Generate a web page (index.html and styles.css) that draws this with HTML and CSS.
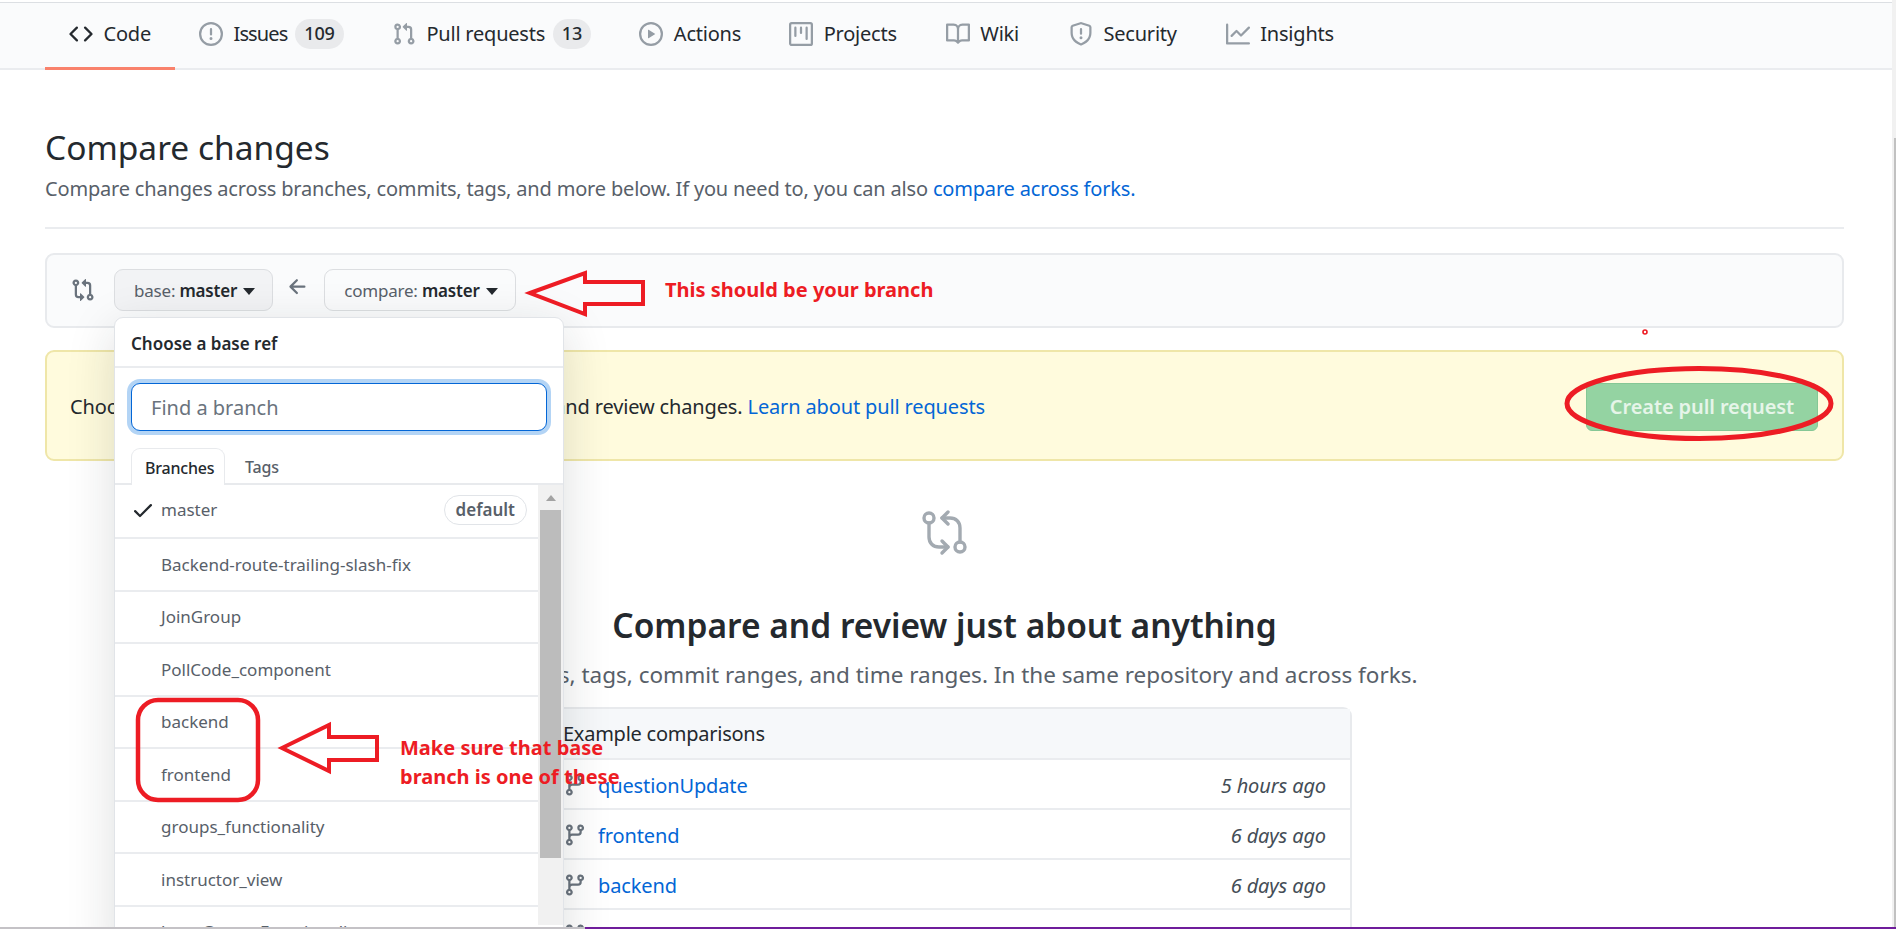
FILE: index.html
```html
<!DOCTYPE html>
<html lang="en">
<head>
<meta charset="utf-8">
<title>Compare changes</title>
<link rel="stylesheet" href="styles.css">
</head>
<body>
<div class="viewport">
  <div class="app">
    <nav class="tabs">
      <a class="tab tab-active"><svg class="oct oct-dark" viewBox="0 0 16 16"><path d="M4.72 3.22a.75.75 0 011.06 1.06L2.06 8l3.72 3.72a.75.75 0 11-1.06 1.06L.47 8.53a.75.75 0 010-1.06l4.25-4.25zm6.56 0a.75.75 0 10-1.06 1.06L13.94 8l-3.72 3.72a.75.75 0 101.06 1.06l4.25-4.25a.75.75 0 000-1.06l-4.25-4.25z"/></svg><span>Code</span></a>
      <a class="tab"><svg class="oct" viewBox="0 0 16 16"><path d="M8 1.5a6.5 6.5 0 100 13 6.5 6.5 0 000-13zM0 8a8 8 0 1116 0A8 8 0 010 8zm9 3a1 1 0 11-2 0 1 1 0 012 0zm-.25-6.25a.75.75 0 00-1.5 0v3.5a.75.75 0 001.5 0v-3.5z"/></svg><span class="tab-tight">Issues</span><b class="count">109</b></a>
      <a class="tab"><svg class="oct" viewBox="0 0 16 16"><path d="M7.177 3.073L9.573.677A.25.25 0 0110 .854v4.792a.25.25 0 01-.427.177L7.177 3.427a.25.25 0 010-.354zM3.75 2.5a.75.75 0 100 1.5.75.75 0 000-1.5zm-2.25.75a2.25 2.25 0 113 2.122v5.256a2.251 2.251 0 11-1.5 0V5.372A2.25 2.25 0 011.5 3.25zM11 2.5h-1V4h1a1 1 0 011 1v5.628a2.251 2.251 0 101.5 0V5A2.5 2.5 0 0011 2.5zm1 10.25a.75.75 0 111.5 0 .75.75 0 01-1.5 0zM3.75 12a.75.75 0 100 1.5.75.75 0 000-1.5z"/></svg><span>Pull requests</span><b class="count">13</b></a>
      <a class="tab"><svg class="oct" viewBox="0 0 16 16"><path d="M1.5 8a6.5 6.5 0 1113 0 6.5 6.5 0 01-13 0zM8 0a8 8 0 100 16A8 8 0 008 0zM6.379 5.227A.25.25 0 006 5.442v5.117a.25.25 0 00.379.214l4.264-2.559a.25.25 0 000-.428L6.379 5.227z"/></svg><span>Actions</span></a>
      <a class="tab"><svg class="oct" viewBox="0 0 16 16"><path d="M1.75 0A1.75 1.75 0 000 1.75v12.5C0 15.216.784 16 1.75 16h12.5A1.75 1.75 0 0016 14.25V1.75A1.75 1.75 0 0014.25 0H1.75zM1.5 1.75a.25.25 0 01.25-.25h12.5a.25.25 0 01.25.25v12.5a.25.25 0 01-.25.25H1.75a.25.25 0 01-.25-.25V1.75zM11.75 3a.75.75 0 00-.75.75v7.5a.75.75 0 001.5 0v-7.5a.75.75 0 00-.75-.75zm-8.25.75a.75.75 0 011.5 0v5.5a.75.75 0 01-1.5 0v-5.5zM8 3a.75.75 0 00-.75.75v3.5a.75.75 0 001.5 0v-3.5A.75.75 0 008 3z"/></svg><span>Projects</span></a>
      <a class="tab tab-wide"><svg class="oct" viewBox="0 0 16 16"><path d="M0 1.75A.75.75 0 01.75 1h4.253c1.227 0 2.317.59 3 1.501A3.744 3.744 0 0111.006 1h4.245a.75.75 0 01.75.75v10.5a.75.75 0 01-.75.75h-4.507a2.25 2.25 0 00-1.591.659l-.622.621a.75.75 0 01-1.06 0l-.622-.621A2.25 2.25 0 005.258 13H.75a.75.75 0 01-.75-.75V1.75zm8.755 3a2.25 2.25 0 012.25-2.25H14.5v9h-3.757c-.71 0-1.4.201-1.992.572l.004-7.322zm-1.504 7.324l.004-5.073-.002-2.253A2.25 2.25 0 005.003 2.5H1.5v9h3.757a3.75 3.75 0 011.994.574z"/></svg><span>Wiki</span></a>
      <a class="tab tab-wide"><svg class="oct" viewBox="0 0 16 16"><path d="M7.467.133a1.75 1.75 0 011.066 0l5.25 1.68A1.75 1.75 0 0115 3.48V7c0 1.566-.32 3.182-1.303 4.682-.983 1.498-2.585 2.813-5.032 3.855a1.7 1.7 0 01-1.33 0c-2.447-1.042-4.049-2.357-5.032-3.855C1.32 10.182 1 8.566 1 7V3.48a1.75 1.75 0 011.217-1.667l5.25-1.68zm.61 1.429a.25.25 0 00-.153 0l-5.25 1.68a.25.25 0 00-.174.238V7c0 1.358.275 2.666 1.057 3.86.784 1.194 2.121 2.34 4.366 3.297a.2.2 0 00.154 0c2.245-.956 3.582-2.104 4.366-3.298C13.225 9.666 13.5 8.36 13.5 7V3.48a.25.25 0 00-.174-.237l-5.25-1.68zM9 10.5a1 1 0 11-2 0 1 1 0 012 0zm-.25-5.75a.75.75 0 10-1.5 0v3a.75.75 0 001.5 0v-3z"/></svg><span>Security</span></a>
      <a class="tab"><svg class="oct" viewBox="0 0 16 16"><path d="M1.5 1.75a.75.75 0 00-1.5 0v12.5c0 .414.336.75.75.75h14.5a.75.75 0 000-1.5H1.5V1.75zm14.28 2.53a.75.75 0 00-1.06-1.06L10 7.94 7.53 5.47a.75.75 0 00-1.06 0L3.22 8.72a.75.75 0 001.06 1.06L7 7.06l2.47 2.47a.75.75 0 001.06 0l5.25-5.25z"/></svg><span>Insights</span></a>
    </nav>

    <main class="content">
      <h1 class="title">Compare changes</h1>
      <p class="lead">Compare changes across branches, commits, tags, and more below. If you need to, you can also <a class="link">compare across forks.</a></p>
      <hr class="rule">

      <section class="range">
        <svg class="oct oct-mid" viewBox="0 0 16 16"><path d="M9.573.677L7.177 3.073a.25.25 0 000 .354l2.396 2.396A.25.25 0 0010 5.646V4h1a1 1 0 011 1v5.628a2.251 2.251 0 101.5 0V5A2.5 2.5 0 0011 2.5h-1V.854a.25.25 0 00-.427-.177zM6 12v-1.646a.25.25 0 01.427-.177l2.396 2.396a.25.25 0 010 .354l-2.396 2.396A.25.25 0 016 15.146V13.5H5A2.5 2.5 0 012.5 11V5.372a2.25 2.25 0 111.5 0V11a1 1 0 001 1h1zm6.75 0a.75.75 0 100 1.5.75.75 0 000-1.5zM4 3.25a.75.75 0 11-1.5 0 .75.75 0 011.5 0z"/></svg>
        <button class="ref ref-open">base: <b>master</b><i class="caret"></i></button>
        <svg class="oct oct-mid range-arrow" viewBox="0 0 16 16"><path d="M7.78 12.53a.75.75 0 01-1.06 0L2.47 8.28a.75.75 0 010-1.06l4.25-4.25a.75.75 0 011.06 1.06L4.81 7h7.44a.75.75 0 010 1.5H4.81l2.97 2.97a.75.75 0 010 1.06z"/></svg>
        <button class="ref">compare: <b>master</b><i class="caret"></i></button>
      </section>

      <section class="notice">
        <p class="notice-text">Choose different branches or forks above to discuss and review changes. <a class="link">Learn about pull requests</a></p>
        <button class="create">Create pull request</button>
      </section>

      <section class="blank">
        <svg class="blank-icon" viewBox="0 0 50 50"><g fill="none" stroke="#a3aab1" stroke-width="3.4" stroke-linecap="round" stroke-linejoin="round"><circle cx="9" cy="8" r="5"/><circle cx="40" cy="37" r="5"/><path d="M9 13v14c0 6 4 10 10 10h9"/><path d="M22 31l6 6-6 6"/><path d="M40 32V18c0-6-4-10-10-10h-8"/><path d="M28 2l-6 6 6 6"/></g></svg>
        <h2 class="blank-title">Compare and review just about anything</h2>
        <p class="blank-sub">Branches, tags, commit ranges, and time ranges. In the same repository and across forks.</p>
        <div class="examples">
          <div class="examples-head">Example comparisons</div>
          <div class="example"><svg class="oct oct-mid" viewBox="0 0 16 16"><use href="#branch"/></svg><a class="link">questionUpdate</a><em>5 hours ago</em></div>
          <div class="example"><svg class="oct oct-mid" viewBox="0 0 16 16"><use href="#branch"/></svg><a class="link">frontend</a><em>6 days ago</em></div>
          <div class="example"><svg class="oct oct-mid" viewBox="0 0 16 16"><use href="#branch"/></svg><a class="link">backend</a><em>6 days ago</em></div>
          <div class="example"><svg class="oct oct-mid" viewBox="0 0 16 16"><use href="#branch"/></svg></div>
        </div>
      </section>
    </main>

    <div class="menu">
      <div class="menu-title">Choose a base ref</div>
      <div class="menu-filter"><input class="menu-input" type="text" placeholder="Find a branch"></div>
      <div class="menu-tabs"><span class="menu-tab menu-tab-on">Branches</span><span class="menu-tab">Tags</span></div>
      <div class="menu-body">
        <ul class="menu-list">
          <li class="menu-item menu-item-first"><svg class="oct oct-check" viewBox="0 0 16 16"><path d="M13.78 4.22a.75.75 0 010 1.06l-7.25 7.25a.75.75 0 01-1.06 0L2.22 9.28a.75.75 0 011.06-1.06L6 10.94l6.72-6.72a.75.75 0 011.06 0z"/></svg><span class="menu-name">master</span><span class="default">default</span></li>
          <li class="menu-item"><span class="menu-name">Backend-route-trailing-slash-fix</span></li>
          <li class="menu-item"><span class="menu-name">JoinGroup</span></li>
          <li class="menu-item"><span class="menu-name">PollCode_component</span></li>
          <li class="menu-item"><span class="menu-name">backend</span></li>
          <li class="menu-item"><span class="menu-name">frontend</span></li>
          <li class="menu-item"><span class="menu-name">groups_functionality</span></li>
          <li class="menu-item"><span class="menu-name">instructor_view</span></li>
          <li class="menu-item"><span class="menu-name">learnGroup_Functionality</span></li>
        </ul>
        <div class="menu-scroll"><i class="menu-scroll-up"></i><i class="menu-scroll-thumb"></i></div>
      </div>
    </div>

    <svg class="marks" viewBox="0 0 1892 927">
      <defs><path id="branch" fill-rule="evenodd" d="M11.75 2.5a.75.75 0 100 1.5.75.75 0 000-1.5zm-2.25.75a2.25 2.25 0 113 2.122V6A2.5 2.5 0 0110 8.5H6a1 1 0 00-1 1v1.128a2.251 2.251 0 11-1.5 0V5.372a2.25 2.25 0 111.5 0v1.836A2.492 2.492 0 016 7h4a1 1 0 001-1v-.628A2.25 2.25 0 019.5 3.25zM4.25 12a.75.75 0 100 1.5.75.75 0 000-1.5zM3.5 3.25a.75.75 0 111.5 0 .75.75 0 01-1.5 0z"/></defs>
      <g fill="none" stroke="#ed1c24" stroke-width="4">
        <path d="M530 293L585 273V282H643V304H585V314Z"/>
        <path d="M282 748L329 725V737H377V760H329V771Z"/>
        <rect x="138" y="700" width="120" height="100" rx="20" stroke-width="4.5"/>
        <ellipse cx="1699" cy="403.500" rx="132" ry="35" stroke-width="5"/>
        <circle cx="1645" cy="332" r="2" stroke-width="1.600"/>
      </g>
    </svg>
    <div class="note note-one">This should be your branch</div>
    <div class="note note-two">Make sure that base<br>branch is one of these</div>
  </div>
  <div class="page-scroll"><i class="page-scroll-thumb"></i></div>
</div>
<div class="taskbar"><i class="taskbar-gray"></i><i class="taskbar-purple"></i></div>
</body>
</html>
```

FILE: styles.css
```css
* { box-sizing: border-box; }
html, body { margin: 0; height: 929px; overflow: hidden; background: #fff; }
body { display: flex; flex-direction: column; font-family: "Noto Sans", "Open Sans", sans-serif; color: #24292e; font-size: 20px; }
p, h1, h2, ul { margin: 0; padding: 0; }
button { font-family: inherit; }

.viewport { display: flex; height: 927px; }
.app { position: relative; flex: 1; min-width: 0; overflow: hidden; }
.page-scroll { width: 4px; background: #f1f1f1; display: flex; flex-direction: column; justify-content: flex-start; padding-top: 138px; align-items: flex-end; }
.page-scroll-thumb { display: block; width: 2px; height: 789px; background: #c1c1c1; }
.taskbar { display: flex; height: 2px; }
.taskbar-gray { display: block; width: 585px; background: #c4c2c6; }
.taskbar-purple { display: block; flex: 1; background: #6f1d9b; }

.oct { width: 24px; height: 24px; fill: #959da5; fill-rule: evenodd; flex: none; }
.oct-dark { fill: #24292e; }
.oct-mid { fill: #6a737d; }
.oct-check { fill: #24292e; position: absolute; left: 16px; top: 13px; }

.tabs { display: flex; height: 68px; margin-top: 2px; padding-left: 45px; background: #fafbfc; border-top: 1px solid #dcdfe3; border-bottom: 2px solid #eaecef; }
.tab { display: flex; align-items: center; gap: 10.5px; padding: 0 24px; height: 67px; padding-bottom: 6px; white-space: nowrap; letter-spacing: -.22px; flex: none; }
.tab-active { border-bottom: 3px solid #f9826c; height: 67px; padding-bottom: 3px; }
.tab-wide { padding-left: 25px; padding-right: 25px; }
.tab-tight { letter-spacing: -.85px; }
.count { display: block; height: 30px; line-height: 29px; padding: 0 9.2px; margin-left: -3px; background: #e9eaec; border-radius: 15px; font-size: 18px; font-weight: 500; letter-spacing: -.1px; }

.content { padding: 54px 48px 0 45px; }
.title { font-size: 33.5px; font-weight: 400; line-height: 46px; }
.lead { font-size: 20px; line-height: 30px; margin-top: 4px; color: #586069; letter-spacing: -.18px; }
.link { color: #0366d6; }
.rule { border: 0; border-top: 2px solid #eaecef; margin: 23px 0 0; }

.range { display: flex; align-items: center; height: 75px; margin-top: 24px; padding: 0 0 1px 24px; background: #fafbfc; border: 2px solid #e8eaed; border-radius: 9px; }
.ref { display: block; height: 42px; padding: 0 17px 0 19px; margin-left: 19px; background: #fafbfc; border: 1.5px solid #dcdee1; border-radius: 9px; font-size: 17px; letter-spacing: -.2px; color: #586069; white-space: nowrap; }
.ref b { color: #24292e; font-weight: 600; }
.ref-open { background: #f2f3f5; }
.caret { display: inline-block; margin-left: 6px; vertical-align: 2px; border: 6px solid transparent; border-top: 7px solid #24292e; border-bottom: 0; }
.range-arrow { margin-left: 13px; margin-top: -6px; }
.range-arrow + .ref { margin-left: 14px; }

.notice { display: flex; align-items: center; justify-content: space-between; height: 111px; margin-top: 22px; padding: 2px 24px 0 23px; background: #fffbdd; border: 2px solid #efe6a8; border-radius: 9px; }
.notice-text { font-size: 20px; color: #24292e; letter-spacing: -.14px; }
.create { width: 232px; height: 48px; background: #94d3a2; border: 1px solid #85c795; border-radius: 6px; color: #e6f5e9; font-size: 20px; font-weight: 600; letter-spacing: -.1px; }

.blank { display: flex; flex-direction: column; align-items: center; padding-top: 49px; }
.blank-icon { width: 50px; height: 50px; display: block; }
.blank-title { font-size: 33.5px; font-weight: 600; line-height: 46px; margin-top: 42px; }
.blank-sub { font-size: 22.5px; line-height: 32px; margin-top: 11px; color: #586069; }
.examples { width: 815px; margin-top: 16px; border: 2px solid #e8eaed; border-bottom: 0; border-radius: 9px 9px 0 0; }
.examples-head { height: 51px; line-height: 50px; padding-left: 24px; background: #f6f8fa; border-bottom: 2px solid #eaecef; font-size: 20px; letter-spacing: -.25px; }
.example { display: flex; align-items: center; gap: 11px; height: 50px; padding: 2px 24px 0; border-bottom: 2px solid #eaecef; font-size: 20px; letter-spacing: -.12px; }
.example em { margin-left: auto; color: #444d56; }

.menu { position: absolute; left: 114px; top: 317px; width: 450px; height: 640px; background: #fff; border: 1px solid #e1e4e8; border-radius: 9px; box-shadow: 0 12px 48px rgba(27,31,35,.15); }
.menu-title { height: 50px; padding-left: 16px; line-height: 52px; font-size: 17px; font-weight: 600; border-bottom: 2px solid #eaecef; }
.menu-filter { padding: 15px 16px 0; }
.menu-input { display: block; width: 416px; height: 48px; padding: 0 19px; border: 1.5px solid #0366d6; border-radius: 9px; box-shadow: 0 0 0 4px #b3d4f5; font: 20px "Noto Sans", sans-serif; color: #24292e; outline: none; }
.menu-input::placeholder { color: #6a737d; opacity: 1; }
.menu-tabs { display: flex; height: 37px; margin-top: 17px; padding-left: 16px; border-bottom: 2px solid #e8eaed; }
.menu-tab { height: 37px; padding: 0 14px; line-height: 39px; font-size: 16px; letter-spacing: -.2px; font-weight: 500; color: #586069; }
.menu-tab-on { width: 94px; padding: 0 13px; background: #fff; border: 1.5px solid #e8eaed; border-bottom: 0; border-radius: 9px 9px 0 0; color: #24292e; }
.menu-tab-on + .menu-tab { margin-left: 6px; }
.menu-body { display: flex; }
.menu-list { list-style: none; flex: 1; min-width: 0; }
.menu-item { position: relative; display: flex; align-items: center; height: 52.5px; padding: 0 11px 0 46px; border-bottom: 2px solid #eaecef; font-size: 17px; color: #586069; }
.menu-item-first { height: 54px; padding-bottom: 3px; }
.default { margin-left: auto; height: 30px; line-height: 27px; padding: 0 11px; border: 1.5px solid #e1e4e8; border-radius: 15px; font-weight: 600; font-size: 17px; }
.menu-scroll { width: 25px; background: #f1f1f1; padding: 10px 2px 0; height: 440px; flex: none; }
.menu-scroll-up { display: block; width: 0; margin: 0 auto 9px; border: 5.5px solid transparent; border-bottom: 6px solid #a3a3a3; border-top: 0; }
.menu-scroll-thumb { display: block; height: 348px; background: #bcbcbc; }

.marks { position: absolute; left: 0; top: 0; width: 1892px; height: 927px; pointer-events: none; }
.note { position: absolute; color: #ed1c24; font-size: 20px; font-weight: 700; white-space: nowrap; line-height: 29px; }
.note-one { left: 665px; top: 275px; }
.note-two { left: 400px; top: 733px; }
```
